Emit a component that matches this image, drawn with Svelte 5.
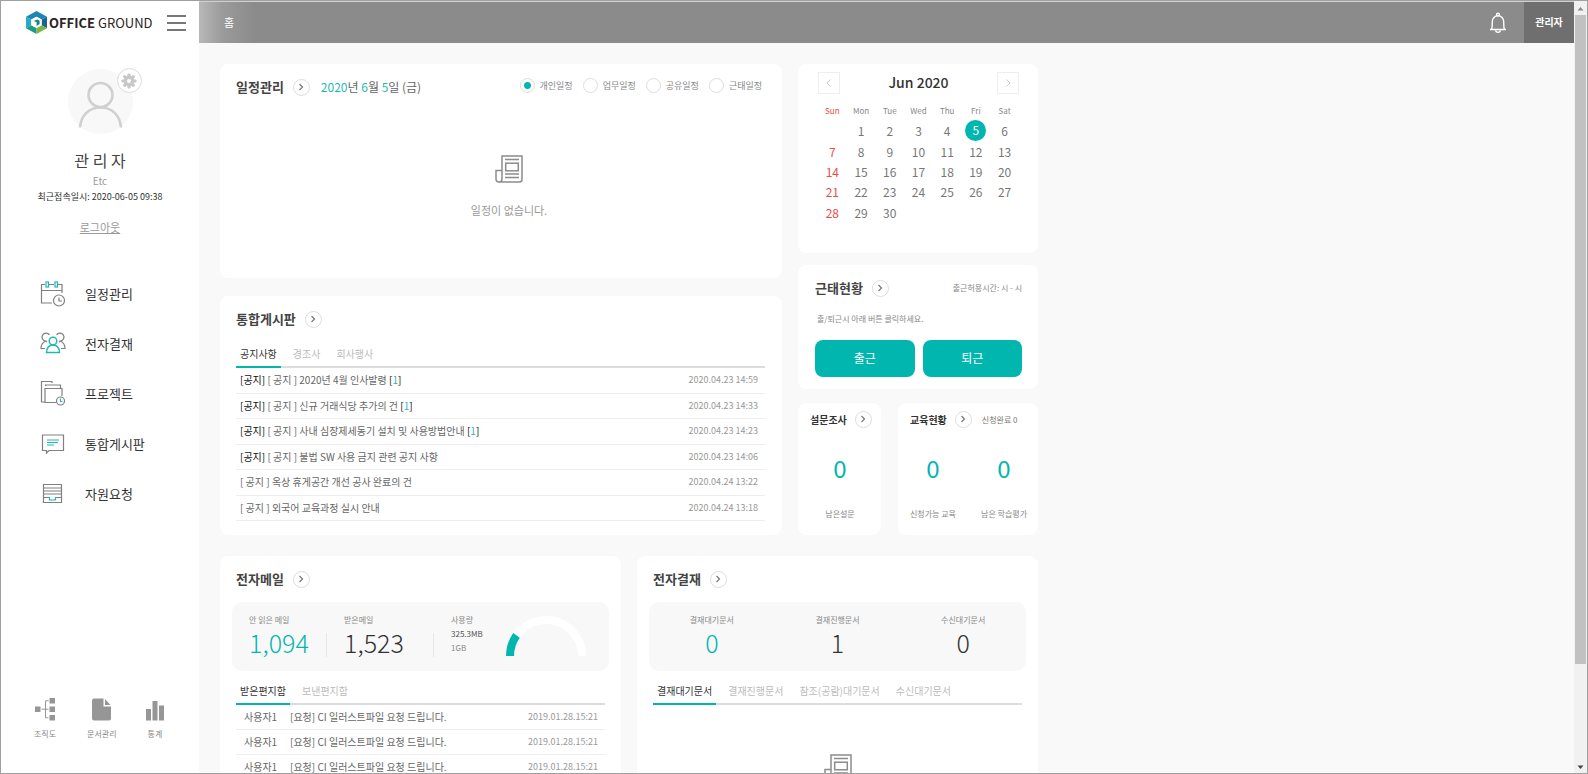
<script>
  const menu = [
    { icon: 'calendar', label: '일정관리' },
    { icon: 'people', label: '전자결재' },
    { icon: 'project', label: '프로젝트' },
    { icon: 'board', label: '통합게시판' },
    { icon: 'request', label: '자원요청' }
  ];
  const tools = [
    { icon: 'org', label: '조직도' },
    { icon: 'doc', label: '문서관리' },
    { icon: 'stats', label: '통계' }
  ];
  const kinds = ['개인일정', '업무일정', '공유일정', '근태일정'];
  let kind = $state('개인일정');

  const posts = [
    { pinned: true, text: '[ 공지 ] 2020년 4월 인사발령', replies: 1, date: '2020.04.23 14:59' },
    { pinned: true, text: '[ 공지 ] 신규 거래식당 추가의 건', replies: 1, date: '2020.04.23 14:33' },
    { pinned: true, text: '[ 공지 ] 사내 심장제세동기 설치 및 사용방법안내', replies: 1, date: '2020.04.23 14:23' },
    { pinned: true, text: '[ 공지 ] 불법 SW 사용 금지 관련 공지 사항', replies: 0, date: '2020.04.23 14:06' },
    { pinned: false, text: '[ 공지 ] 옥상 휴게공간 개선 공사 완료의 건', replies: 0, date: '2020.04.24 13:22' },
    { pinned: false, text: '[ 공지 ] 외국어 교육과정 실시 안내', replies: 0, date: '2020.04.24 13:18' }
  ];
  const mails = Array.from({ length: 3 }, () => ({
    from: '사용자1',
    text: '[요청] CI 일러스트파일 요청 드립니다.',
    date: '2019.01.28.15:21'
  }));

  const weekdays = ['Sun', 'Mon', 'Tue', 'Wed', 'Thu', 'Fri', 'Sat'];
  const firstDay = 1;
  const today = 5;
  const weeks = Array.from({ length: 5 }, (_, w) =>
    Array.from({ length: 7 }, (_, d) => {
      const n = w * 7 + d - firstDay + 1;
      return n >= 1 && n <= 30 ? n : null;
    })
  );
  const approvals = [
    { label: '결재대기문서', value: 0 },
    { label: '결재진행문서', value: 1 },
    { label: '수신대기문서', value: 0 }
  ];
</script>

{#snippet more(label)}
  <button class="more" aria-label={label}>
    <svg width="8" height="8" viewBox="0 0 8 8"><path d="M2.500 1l3 3-3 3" fill="none" stroke="#777" stroke-width="1.200" /></svg>
  </button>
{/snippet}

{#snippet tabs(items)}
  <div class="tabs" role="tablist">
    {#each items as t, i}
      <button role="tab" aria-selected={i === 0} class:on={i === 0}>{t}</button>
    {/each}
  </div>
{/snippet}

{#snippet news()}
  <svg width="28" height="28" viewBox="0 0 28 28" fill="none" stroke="#8c8c8c" stroke-width="1.500">
    <path d="M7 15.500V1h20v23.500a2.500 2.500 0 0 1-2.500 2.500H4a3 3 0 0 1-3-3v-8.500h6V24a3 3 0 0 1-3 3" />
    <path d="M10 4.500h14M10 19h14M10 22.500h14" />
    <rect x="10.700" y="8.200" width="12.600" height="7.600" />
  </svg>
{/snippet}

<div class="frame">
  <aside class="sidebar">
    <div class="brand">
      <a class="logo" href="#home">
        <svg width="21" height="23" viewBox="0 0 21 23">
          <path d="M10.500 0L21 5.700 15.600 8.500 10.500 5.800 5.300 8.600 0 5.700z" fill="#1d86b5" />
          <path d="M0 5.700v11.600l5.300-3V8.600z" fill="#27a9c9" />
          <path d="M21 5.700v11.600l-5.400-3V8.500z" fill="#1b6590" />
          <path d="M0 17.300L10.500 23v-5.900l-5.200-2.800z" fill="#1c9a84" />
          <path d="M10.500 23L21 17.300l-5.400-3-5.100 2.800z" fill="#7ab648" />
          <path d="M10.500 5.800l5.100 2.700v5.800l-5.100 2.800-5.200-2.800V8.600z" fill="#fff" />
          <path d="M7.800 9.900l3.400-1.500 2.400 1.300v3.300l-3 2v-3.700z" fill="#17857c" />
        </svg>
        <span><b>OFFICE</b> GROUND</span>
      </a>
      <button class="burger" aria-label="메뉴"><i></i><i></i><i></i></button>
    </div>

    <section class="profile">
      <div class="avatar">
        <svg width="65" height="65" viewBox="0 0 65 65">
          <circle cx="32.500" cy="32.500" r="32.500" fill="#f8f8f8" />
          <g fill="none" stroke="#d0d0d0" stroke-width="2.600">
            <circle cx="32.500" cy="26" r="12" />
            <path d="M12 58.500C13 46 21 38.500 32.500 38.500S52 46 53 58.500" />
          </g>
        </svg>
        <button class="gear" aria-label="설정">
          <svg width="16" height="16" viewBox="-8 -8 16 16">
            <g fill="#c8c8c8">
              {#each [0, 45, 90, 135] as a}
                <rect x="-1.600" y="-7.500" width="3.200" height="15" rx="1" transform="rotate({a})" />
              {/each}
              <circle r="5.400" />
            </g>
            <circle r="2" fill="#fff" />
          </svg>
        </button>
      </div>
      <strong>관 리 자</strong>
      <span class="dept">Etc</span>
      <span class="login">최근접속일시: 2020-06-05 09:38</span>
      <a class="logout" href="#logout">로그아웃</a>
    </section>

    <nav class="menu">
      {#each menu as m}
        <a href="#{m.icon}">
          <svg width="28" height="28" viewBox="0 0 28 28" fill="none" stroke="#808080" stroke-width="1.200">
            {#if m.icon === 'calendar'}
              <path d="M13 24H2.500V5.500H6M10 5.500h5M19 5.500h4V14M2.500 11.500H23" />
              <g stroke="#1fb9b4"><rect x="7" y="3" width="2.500" height="5" /><rect x="16" y="3" width="2.500" height="5" /></g>
              <circle cx="20" cy="21.500" r="5.500" /><path d="M20 18.500v3.500h3" />
            {:else if m.icon === 'people'}
              <path d="M10.500 6A4 4 0 1 0 6.500 12C3.500 13.500 2 16 2 19.500h4M17.500 6A4 4 0 1 1 21.500 12C24.500 13.500 26 16 26 19.500h-4M6.500 12l1.500 1M21.500 12l-1.500 1" />
              <g stroke="#1fb9b4" stroke-width="1.400"><circle cx="14" cy="12" r="3.800" /><path d="M7.500 23.500C7.800 18.500 10.500 16 14 16s6.200 2.500 6.500 7.500z" /></g>
            {:else if m.icon === 'project'}
              <path d="M13 4V2.500H2.500v20.500H6M6.500 7V6h15v3.500M17 23.500H6V9.500h17V17M6 23V9" />
              <circle cx="21.500" cy="22" r="4" /><path d="M21.500 19.500V22.500h2" stroke="#1fb9b4" />
            {:else if m.icon === 'board'}
              <path d="M3.500 6h21v15.500H10L7.500 24v-2.500H3.500z" />
              <path d="M8 11h12M8 13.500h11M8 16h7" stroke="#1fb9b4" />
            {:else}
              <path d="M4.500 5.500h18v18h-18zM4.500 9h18M4.500 12h18M4.500 15h18M4.500 18.500H9M18 18.500h4.500" />
              <path d="M9 18.500h1.500V21h6v-2.500H18" stroke="#1fb9b4" />
            {/if}
          </svg>
          {m.label}
        </a>
      {/each}
    </nav>

    <nav class="tools">
      {#each tools as t}
        <a href="#{t.icon}">
          <svg width="22" height="24" viewBox="0 0 22 24" fill="#969696">
            {#if t.icon === 'org'}
              <rect x="1" y="9.500" width="5.500" height="5.500" /><rect x="15.500" y="1" width="5.500" height="5.500" /><rect x="15.500" y="9.500" width="5.500" height="5.500" /><rect x="15.500" y="18" width="5.500" height="5.500" />
              <path d="M7.500 12.200h7M14.500 3.800h-3v17h3" fill="none" stroke="#969696" />
            {:else if t.icon === 'doc'}
              <path d="M3 1.500h9.500v8H20V21.500a2 2 0 0 1-2 2H3a2 2 0 0 1-2-2v-18a2 2 0 0 1 2-2z" />
              <path d="M14 2v6h5.500z" />
            {:else}
              <rect x="2" y="12" width="5" height="11.500" /><rect x="8.500" y="4" width="5" height="19.500" /><rect x="15" y="8.500" width="5" height="15" />
            {/if}
          </svg>
          {t.label}
        </a>
      {/each}
    </nav>
  </aside>

  <div class="content">
    <header class="topbar">
      <span class="crumb">홈</span>
      <button class="bell" aria-label="알림">
        <svg width="18" height="22" viewBox="0 0 18 22" fill="none" stroke="#fff" stroke-width="1.400">
          <path d="M1 17.500h16M2.500 17.500C3.500 15 3.300 12.500 3.300 9.500a5.700 5.700 0 0 1 11.400 0c0 3-.2 5.500.8 8M6.500 18.500a2.600 2.600 0 0 0 5 0" />
          <circle cx="9" cy="2.500" r="1.400" />
        </svg>
      </button>
      <button class="me">관리자</button>
    </header>

    <main>
      <div class="row">
        <div class="left">
          <section class="card schedule">
            <div class="head">
              <h2>일정관리</h2>
              {@render more('일정관리 더보기')}
              <span class="date"><em>2020</em>년 <em>6</em>월 <em>5</em>일 (금)</span>
              <div class="radios">
                {#each kinds as k}
                  <label><input type="radio" name="kind" value={k} bind:group={kind} />{k}</label>
                {/each}
              </div>
            </div>
            <div class="empty">
              {@render news()}
              <p>일정이 없습니다.</p>
            </div>
          </section>

          <section class="card board">
            <div class="head">
              <h2>통합게시판</h2>
              {@render more('통합게시판 더보기')}
            </div>
            {@render tabs(['공지사항', '경조사', '회사행사'])}
            <ul class="list">
              {#each posts as p}
                <li>
                  <a href="#post">{#if p.pinned}<b>[공지]</b>{' '}{/if}{p.text}{#if p.replies}{' '}<b>[<em>{p.replies}</em>]</b>{/if}</a>
                  <time>{p.date}</time>
                </li>
              {/each}
            </ul>
          </section>
        </div>

        <div class="right">
          <section class="card calendar">
            <div class="month">
              <button aria-label="이전 달"><svg width="10" height="10" viewBox="0 0 10 10"><path d="M6.500 1.500L3 5l3.500 3.500" fill="none" stroke="#ccc" /></svg></button>
              <h3>Jun 2020</h3>
              <button aria-label="다음 달"><svg width="10" height="10" viewBox="0 0 10 10"><path d="M3.500 1.500L7 5 3.500 8.500" fill="none" stroke="#ccc" /></svg></button>
            </div>
            <table>
              <thead><tr>{#each weekdays as d}<th>{d}</th>{/each}</tr></thead>
              <tbody>
                {#each weeks as week}
                  <tr>{#each week as n}<td><span class:today={n === today}>{n ?? ''}</span></td>{/each}</tr>
                {/each}
              </tbody>
            </table>
          </section>

          <section class="card attend">
            <div class="head">
              <h2>근태현황</h2>
              {@render more('근태현황 더보기')}
              <span class="note">출근허용시간: 시 - 시</span>
            </div>
            <p>출/퇴근시 아래 버튼 클릭하세요.</p>
            <div class="buttons"><button>출근</button><button>퇴근</button></div>
          </section>

          <div class="pair">
            <section class="card small survey">
              <div class="head">
                <h4>설문조사</h4>
                {@render more('설문조사 더보기')}
              </div>
              <div class="counts"><div><b>0</b><span>남은설문</span></div></div>
            </section>
            <section class="card small">
              <div class="head">
                <h4>교육현황</h4>
                {@render more('교육현황 더보기')}
                <span class="done">신청완료 0</span>
              </div>
              <div class="counts">
                <div><b>0</b><span>신청가능 교육</span></div>
                <div><b>0</b><span>남은 학습평가</span></div>
              </div>
            </section>
          </div>
        </div>
      </div>

      <div class="row">
        <section class="card half">
          <div class="head">
            <h2>전자메일</h2>
            {@render more('전자메일 더보기')}
          </div>
          <div class="box">
            <div class="stat unread"><span>안 읽은 메일</span><b class="teal">1,094</b></div>
            <i class="rule"></i>
            <div class="stat received"><span>받은메일</span><b>1,523</b></div>
            <i class="rule"></i>
            <div class="usage"><span>사용량</span><span class="used">325.3MB</span><span>1GB</span></div>
            <svg class="gauge" width="80" height="40" viewBox="0 0 80 40" fill="none" stroke-width="8">
              <path d="M4 40a36 36 0 0 1 72 0" stroke="#fff" />
              <path d="M4 40A36 36 0 0 1 10.500 19.400" stroke="#02b6b0" />
            </svg>
          </div>
          {@render tabs(['받은편지함', '보낸편지함'])}
          <ul class="list mail">
            {#each mails as m}
              <li><span>{m.from}</span><a href="#mail">{m.text}</a><time>{m.date}</time></li>
            {/each}
          </ul>
        </section>

        <section class="card half">
          <div class="head">
            <h2>전자결재</h2>
            {@render more('전자결재 더보기')}
          </div>
          <div class="box thirds">
            {#each approvals as a, i}
              <div class="stat"><span>{a.label}</span><b class:teal={i === 0}>{a.value}</b></div>
            {/each}
          </div>
          {@render tabs(['결재대기문서', '결재진행문서', '참조(공람)대기문서', '수신대기문서'])}
          <div class="empty">{@render news()}</div>
        </section>
      </div>
    </main>
  </div>

  <div class="scroll" aria-hidden="true">
    <svg width="13" height="14" viewBox="0 0 13 14"><path d="M3.500 9.500l3-3.500 3 3.500z" fill="#8a8a8a" /></svg>
    <div class="track"><div class="thumb"></div></div>
    <svg width="13" height="12" viewBox="0 0 13 12"><path d="M3.500 4.500h6l-3 3.500z" fill="#444" /></svg>
  </div>
</div>

<style>
  :global(body) {
    margin: 0;
    font-family: 'Noto Sans CJK KR', 'Noto Sans', sans-serif;
    font-size: 10px;
    color: #666;
  }
  * { box-sizing: border-box; }
  button { padding: 0; border: 0; background: none; font: inherit; color: inherit; cursor: pointer; }
  a { color: inherit; text-decoration: none; }
  h2, h3, h4, p, ul { margin: 0; padding: 0; }
  em { font-style: normal; color: #1fb9b4; }
  svg { display: block; flex: none; }

  .frame { display: flex; height: 100vh; overflow: hidden; border: 1px solid #a0a0a0; background: #f9f9f9; }

  .sidebar { display: flex; flex-direction: column; flex: none; width: 198px; background: #fff; }
  .brand { display: flex; align-items: center; justify-content: space-between; height: 43px; padding: 0 13px 0 25px; }
  .logo { display: flex; align-items: center; gap: 2px; font-size: 13px; line-height: 20px; color: #2b2325; white-space: nowrap; }
  .burger { display: flex; flex-direction: column; justify-content: space-between; width: 19px; height: 16px; }
  .burger i { height: 2px; background: #777; }

  .profile { display: flex; flex-direction: column; align-items: center; margin-top: 25px; }
  .avatar { position: relative; }
  .gear { position: absolute; top: -1px; right: -9px; display: grid; place-items: center; width: 25px; height: 25px; border: 1px solid #ddd; border-radius: 50%; background: #fff; }
  .profile strong { margin-top: 14px; font-size: 16px; font-weight: 400; line-height: 24px; color: #444; }
  .dept { margin-top: 2px; line-height: 14px; color: #999; }
  .login { margin-top: 2px; font-size: 9px; line-height: 14px; color: #333; }
  .logout { margin-top: 14px; font-size: 11px; line-height: 18px; color: #999; text-decoration: underline; }

  .menu { display: flex; flex-direction: column; margin-top: 32px; }
  .menu a { display: flex; align-items: center; gap: 18px; height: 50px; padding-left: 38px; font-size: 13px; color: #333; }

  .tools { display: flex; gap: 31px; margin-top: auto; padding: 0 0 33px 33px; }
  .tools a { display: flex; flex-direction: column; align-items: center; gap: 7px; font-size: 8px; line-height: 12px; color: #888; }
  .tools svg { margin: 0 -4px; }

  .content { display: flex; flex-direction: column; flex: 1; min-width: 0; }
  .topbar { display: flex; flex: none; align-items: stretch; height: 42px; border-top: 1px solid #d0d0d0; background: linear-gradient(90deg, #b8b8b8, #9a9a9a 24px, #8b8b8b 56px); color: #fff; }
  .crumb { margin-right: auto; padding-left: 25px; font-size: 11px; line-height: 40px; }
  .bell { display: grid; place-items: center; width: 18px; margin-right: 17px; }
  .me { width: 50px; padding-bottom: 2px; background: #6f6f6f; font-weight: 700; }

  main { display: flex; flex-direction: column; gap: 21px; width: 100%; max-width: 860px; min-height: 0; padding: 21px; overflow: hidden; }
  .row { display: flex; flex: none; gap: 16px; }
  .left { display: flex; flex: 562; flex-direction: column; gap: 18px; min-width: 0; }
  .right { display: flex; flex: 240; flex-direction: column; min-width: 0; }
  .card { border-radius: 8px; background: #fff; box-shadow: 0 0 2px rgba(0, 0, 0, 0.02); }

  .head { display: flex; align-items: center; height: 24px; white-space: nowrap; }
  .head h2, .date, .note { padding-bottom: 2px; }
  h2 { font-size: 13px; font-weight: 700; color: #444; }
  h4 { font-size: 10px; font-weight: 700; color: #333; }
  .more { display: grid; place-items: center; flex: none; width: 17px; height: 17px; margin-left: 9px; border: 1px solid #ddd; border-radius: 50%; }
  .small .more { margin-left: 8px; }
  .date { margin-left: 11px; font-size: 12px; }

  .schedule { min-height: 214px; padding: 11px 20px 0 16px; }
  .radios { display: flex; align-self: flex-start; gap: 10px; height: 20px; margin-left: auto; font-size: 9px; color: #888; }
  .radios label { display: flex; align-items: center; gap: 5px; }
  .radios input { appearance: none; width: 15px; height: 15px; margin: 0; border: 1px solid #ddd; border-radius: 50%; background: #fff; }
  .radios input:checked { background: radial-gradient(circle, #02b6b0 3px, #fff 4px); }
  .empty { display: flex; flex-direction: column; align-items: center; padding-top: 56px; }
  .empty p { margin-top: 19px; font-size: 11px; line-height: 16px; color: #999; }
  .schedule .empty { padding-left: 20px; }

  .board { padding: 11px 17px 14px 16px; }
  .tabs { display: flex; gap: 8px; height: 26px; margin-top: 11px; border-bottom: 2px solid #ddd; }
  .tabs button { height: 26px; padding: 0 4px; border-bottom: 2px solid transparent; line-height: 24px; color: #bbb; white-space: nowrap; }
  .tabs .on { border-color: #02b6b0; color: #333; }
  .list { display: grid; grid-auto-rows: 1fr; min-height: 153px; list-style: none; }
  .list li { display: flex; align-items: center; padding: 0 7px 1px 4px; border-bottom: 1px solid #eee; white-space: nowrap; }
  .list b { font-weight: 400; color: #111; }
  .list time { margin-left: auto; font-size: 9px; color: #999; }
  .list.mail { grid-auto-rows: 25px; min-height: 0; }
  .mail li { padding-left: 8px; }
  .mail span { width: 46px; }

  .calendar { min-height: 189px; padding: 8px 19px 0 20px; }
  .month { display: flex; align-items: center; justify-content: space-between; height: 22px; }
  .month button { display: grid; place-items: center; width: 22px; height: 22px; border: 1px solid #eee; }
  h3 { padding-bottom: 2px; font-size: 14px; font-weight: 500; line-height: 20px; color: #333; }
  table { width: 100%; height: 121px; margin-top: 8px; border-collapse: collapse; table-layout: fixed; text-align: center; }
  th { height: 18px; padding: 0; font-size: 8px; font-weight: 400; line-height: 12px; color: #888; }
  td { padding: 0; font-size: 12px; line-height: 18px; color: #777; }
  th:first-child, td:first-child { color: #ea4c4c; }
  td span { display: block; }
  td .today { width: 21px; height: 21px; margin: -1px auto; border-radius: 50%; background: #02b6b0; line-height: 20px; color: #fff; }

  .attend { margin-top: 12px; padding: 11px 16px 12px 17px; }
  .note { margin-left: auto; font-size: 8px; color: #888; }
  .attend p { margin-top: 13px; padding-left: 2px; font-size: 8px; line-height: 12px; color: #888; }
  .buttons { display: grid; grid-template-columns: 1fr 1fr; gap: 8px; margin-top: 15px; }
  .buttons button { height: 37px; padding-bottom: 2px; border-radius: 8px; background: #02b6b0; font-size: 12px; color: #fff; }

  .pair { display: grid; grid-template-columns: minmax(0, 83fr) minmax(0, 140fr); gap: 17px; margin-top: 14px; }
  .small { padding: 4px 11px 15px 12px; }
  .done { margin-left: 10px; font-size: 8px; color: #777; }
  .counts { display: flex; justify-content: space-between; margin-top: 22px; }
  .survey .counts { justify-content: center; }
  .counts div { display: flex; flex-direction: column; align-items: center; }
  .counts b { font-size: 24px; font-weight: 400; line-height: 30px; color: #02b6b0; }
  .counts span { margin-top: 25px; font-size: 8px; line-height: 12px; color: #888; white-space: nowrap; }

  .half { flex: 1; min-width: 0; padding: 11px 12px 13px; }
  .half .head, .half .tabs, .half .list { margin-left: 4px; margin-right: 4px; }
  .half .tabs { margin-top: 8px; }
  .half .empty { padding-top: 49px; }
  .box { display: flex; height: 69px; margin-top: 11px; border-radius: 10px; background: #f8f8f8; color: #888; font-size: 8px; white-space: nowrap; }
  .stat { display: flex; flex-direction: column; gap: 2px; padding-top: 12px; line-height: 12px; }
  .stat b { font-size: 25px; font-weight: 300; line-height: 28px; color: #333; }
  .stat .teal { color: #02b6b0; }
  .unread { width: 94px; padding-left: 17px; }
  .received { width: 106px; padding-left: 17px; }
  .rule { align-self: flex-end; width: 1px; height: 24px; margin-bottom: 14px; background: #e8e8e8; }
  .usage { display: flex; flex-direction: column; width: 72px; padding: 11px 0 0 17px; line-height: 14px; }
  .used { color: #555; }
  .gauge { margin-top: 14px; }
  .thirds .stat { flex: 1; align-items: center; }

  .scroll { display: flex; flex: none; flex-direction: column; width: 13px; background: #f1f1f1; }
  .track { flex: 1; padding: 0 1px; }
  .thumb { height: 87%; background: #c1c1c1; }
</style>
